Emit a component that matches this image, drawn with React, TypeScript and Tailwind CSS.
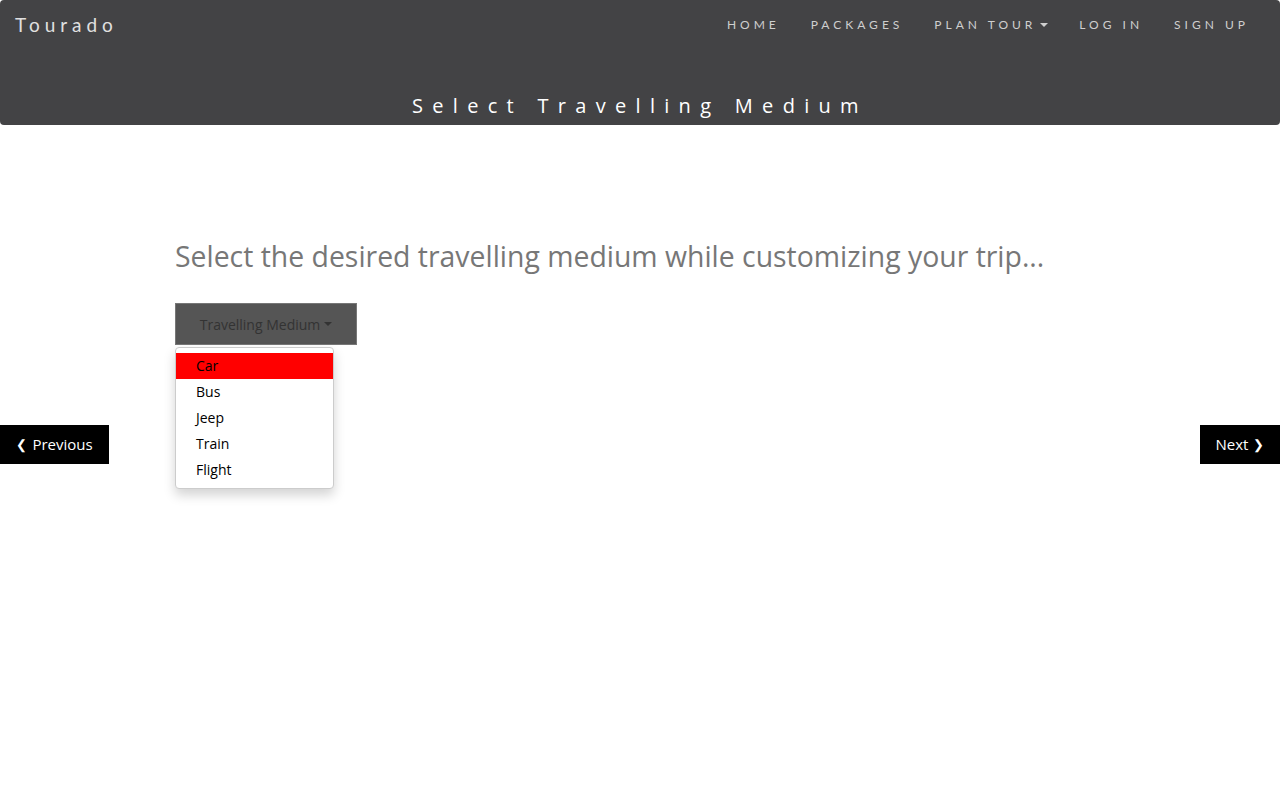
export default function App() {
  const media = ['Car', 'Bus', 'Jeep', 'Train', 'Flight'];
  const nav = ['HOME', 'PACKAGES', 'PLAN TOUR', 'LOG IN', 'SIGN UP'];

  return (
    <div className="w-[1280px] h-[800px] bg-white relative font-['Open_Sans',sans-serif]">
      {/* header */}
      <div className="h-[125px] bg-[#434345] rounded-[4px] flex flex-col">
        <div className="flex items-center justify-between h-[50px] pl-[15px] pr-[31px]">
          <span className="text-[19px] tracking-[5px] text-[#e0e0e0] font-['Lato',sans-serif]">Tourado</span>
          <ul className="flex items-center gap-[31px] text-[12px] tracking-[4px] text-[#cfcfcf] font-['Lato',sans-serif]">
            {nav.map((n) => (
              <li key={n} className="flex items-center">
                {n}
                {n === 'PLAN TOUR' && (
                  <span className="ml-[4px] inline-block w-0 h-0 border-l-[4px] border-r-[4px] border-t-[4px] border-l-transparent border-r-transparent border-t-[#cfcfcf]" />
                )}
              </li>
            ))}
          </ul>
        </div>
        <div className="flex-1 flex items-end justify-center pb-[9px]">
          <h2 className="text-[20px] tracking-[9.3px] text-white leading-none">Select Travelling Medium</h2>
        </div>
      </div>

      {/* body */}
      <div className="pl-[175px] pt-[112px]">
        <h1 className="text-[28.4px] text-[#777] leading-[38px]">
          Select the desired travelling medium while customizing your trip...
        </h1>
        <div className="mt-[28px] relative">
          <button className="w-[182px] h-[42px] bg-[#555] border border-[#777] text-[14px] text-[#333] flex items-center justify-center gap-[4px]">
            Travelling Medium
            <span className="inline-block w-0 h-0 border-l-[4px] border-r-[4px] border-t-[4px] border-l-transparent border-r-transparent border-t-[#333]" />
          </button>
          <ul className="mt-[2px] w-[159px] bg-white border border-[#ccc] rounded-[4px] shadow-[0_6px_12px_rgba(0,0,0,0.175)] py-[5px]">
            {media.map((m, i) => (
              <li
                key={m}
                className={`h-[26px] leading-[26px] pl-[20px] text-[14px] text-black ${i === 0 ? 'bg-[#ff0000]' : ''}`}
              >
                {m}
              </li>
            ))}
          </ul>
        </div>
      </div>

      <button className="absolute left-0 top-[425px] w-[109px] h-[39px] bg-black text-white text-[15px] flex items-center justify-center">
        <span className="text-[13px] mr-[5px]">❮</span>Previous
      </button>
      <button className="absolute right-0 top-[425px] w-[80px] h-[39px] bg-black text-white text-[15px] flex items-center justify-center">
        Next<span className="text-[13px] ml-[5px]">❯</span>
      </button>
    </div>
  );
}
